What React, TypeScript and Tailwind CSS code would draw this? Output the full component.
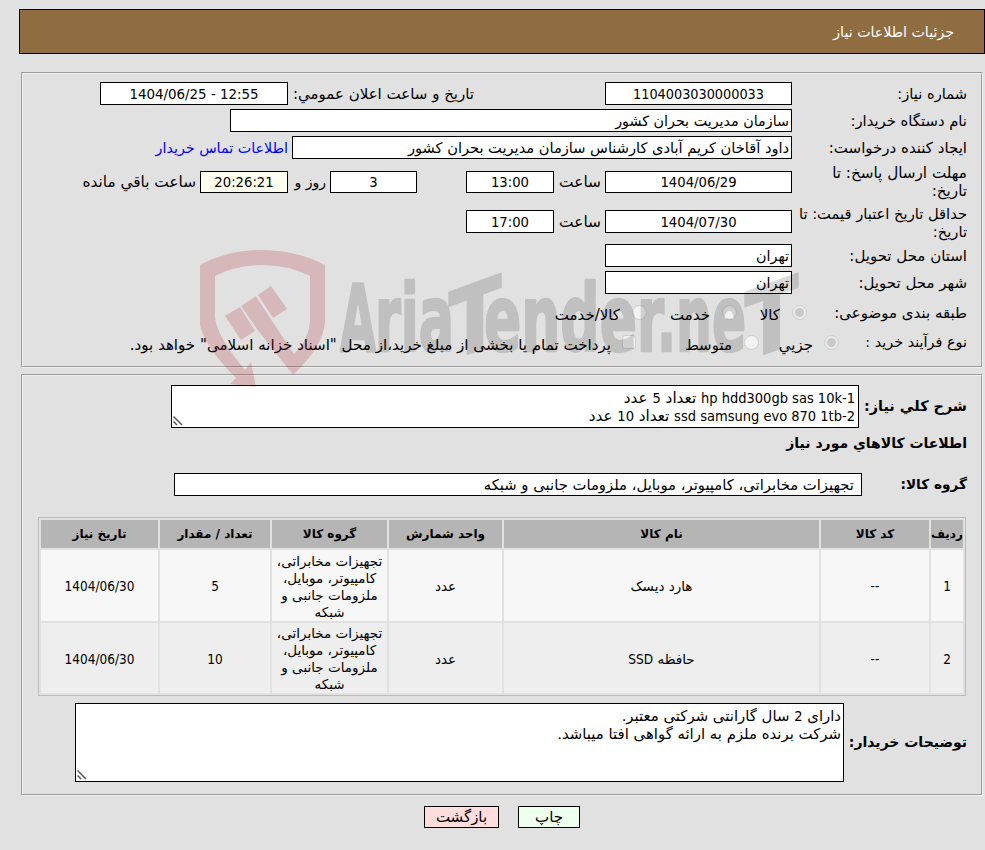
import React from 'react';

interface FieldProps {
  className: string;
  children?: React.ReactNode;
}

interface ItemRow {
  index: string;
  code: string;
  name: React.ReactNode;
  unit: string;
  group: string;
  quantity: string;
  date: string;
}

// Latin letters and digits are set in a narrower face than the Persian text
const Latin: React.FC<{ children?: React.ReactNode }> = ({ children }) => (
  <span className="text-[14.5px] font-['DejaVu_Sans_Condensed','DejaVu_Sans',sans-serif]">{children}</span>
);

const items: ItemRow[] = [
  {
    index: '1',
    code: '--',
    name: 'هارد دیسک',
    unit: 'عدد',
    group: 'تجهیزات مخابراتی، کامپیوتر، موبایل، ملزومات جانبی و شبکه',
    quantity: '5',
    date: '1404/06/30'
  },
  {
    index: '2',
    code: '--',
    name: (
      <span>
        حافظه <span className="font-['DejaVu_Sans_Condensed','DejaVu_Sans',sans-serif]">SSD</span>
      </span>
    ),
    unit: 'عدد',
    group: 'تجهیزات مخابراتی، کامپیوتر، موبایل، ملزومات جانبی و شبکه',
    quantity: '10',
    date: '1404/06/30'
  }
];

const headers = ['ردیف', 'کد کالا', 'نام کالا', 'واحد شمارش', 'گروه کالا', 'تعداد / مقدار', 'تاریخ نیاز'];

const gridCols = 'grid grid-cols-[32px_108px_315px_113px_115px_110px_117px] gap-0.5';

const Label: React.FC<FieldProps> = ({ className, children }) => (
  <div className={`shrink-0 whitespace-nowrap ${className}`}>{children}</div>
);

const Field: React.FC<FieldProps> = ({ className, children }) => (
  <div className={`shrink-0 h-[23px] border border-black leading-[22px] whitespace-nowrap ${className}`}>{children}</div>
);

const NumberField: React.FC<FieldProps> = ({ className, children }) => (
  <div
    dir="ltr"
    className={`shrink-0 border border-black text-center whitespace-nowrap font-['DejaVu_Sans_Condensed','DejaVu_Sans',sans-serif] ${className}`}
  >
    {children}
  </div>
);

const Radio: React.FC<{ checked?: boolean }> = ({ checked }) => (
  <span
    className={`flex shrink-0 w-[15px] h-[15px] items-center justify-center rounded-full border border-[#cdcdcd] ${
      checked ? 'bg-[#ebebeb]' : 'bg-[#f2f2f2]'
    }`}
  >
    {checked && <span className="w-[9px] h-[9px] rounded-full bg-[#c9c9c9]" />}
  </span>
);

const ResizeHandle: React.FC = () => (
  <svg className="absolute left-px bottom-px" width="10" height="10" viewBox="0 0 10 10">
    <path d="M0.5 0.5 L9 9 M0.5 5.5 L4 9" stroke="#5a5a5a" strokeWidth="1.5" fill="none" />
  </svg>
);

const Watermark: React.FC = () => (
  <svg
    className="absolute left-0 top-0 pointer-events-none [direction:ltr]"
    width="985"
    height="850"
    viewBox="0 0 985 850"
  >
    <g fill="rgb(170,20,30)" fillOpacity="0.2">
      <path d="M200 265 Q228 250 262 250 Q296 250 325 265 V322 Q323 347 293 375 L257 329 L241 306 L256 296 L272 321 L294 354 Q310 339 310 318 V276 Q288 265 262 265 Q236 265 215 276 V318 Q218 338 245 370 L251 362 L256 387 L230 384 L236 378 Q203 345 200 324 Z" />
      <path d="M225 316 L240 307 L255 331 L241 340 Z" />
      <path d="M258 295 L271 286 L287 309 L273 318 Z" />
    </g>
    <g
      className="font-['DejaVu_Sans_Condensed','DejaVu_Sans',sans-serif] font-bold"
      fill="#000"
      stroke="#000"
      strokeWidth="2.5"
      strokeLinejoin="round"
      opacity="0.14"
      fontSize="93"
    >
      <text x="340" y="351" textLength="36" lengthAdjust="spacingAndGlyphs">A</text>
      <text x="375" y="351" textLength="79" lengthAdjust="spacingAndGlyphs">ria</text>
      <text x="449" y="351" textLength="52" lengthAdjust="spacingAndGlyphs" transform="translate(475 0) skewY(-20) translate(-475 0)">T</text>
      <text x="484" y="351" textLength="180" lengthAdjust="spacingAndGlyphs">ender</text>
      <text x="657" y="351" textLength="89" lengthAdjust="spacingAndGlyphs">.ne</text>
      <text x="745" y="351" textLength="53" lengthAdjust="spacingAndGlyphs" transform="translate(772 0) skewY(-20) translate(-772 0)">T</text>
    </g>
  </svg>
);

const RequestInfo: React.FC = () => (
  <section className="w-[962px] h-[296px] mr-0.5 mt-[18px] border-2 [border-style:groove] border-[#f0f0f0] pt-2 pr-3.5">
    <div className="flex h-[27px] leading-[24px]">
      <Label className="w-[175px] text-[14.7px]">شماره نیاز:</Label>
      <NumberField className="w-[187px] h-[23px] bg-white text-[14.3px] leading-[22px]">1104003030000033</NumberField>
      <Label className="w-[186px] mr-[131px]">تاریخ و ساعت اعلان عمومي:</Label>
      <NumberField className="w-[188px] h-[23px] bg-white text-[14.9px] leading-[22px]">1404/06/25 - 12:55</NumberField>
    </div>
    <div className="flex h-[27px] leading-[24px]">
      <Label className="w-[175px] text-[14.8px]">نام دستگاه خریدار:</Label>
      <Field className="w-[562px] bg-white pr-0.5 text-[14.3px]">سازمان مدیریت بحران کشور</Field>
    </div>
    <div className="flex h-[27px] leading-[24px]">
      <Label className="w-[175px]">ایجاد کننده درخواست:</Label>
      <Field className="w-[500px] bg-white pr-0.5 text-[14.6px]">
        داود آقاخان کریم آبادی کارشناس سازمان مدیریت بحران کشور
      </Field>
      <Label className="mr-1 text-[14.3px] text-[#0000ff]">اطلاعات تماس خریدار</Label>
    </div>
    <div className="flex h-[37px] items-center">
      <Label className="w-[175px] leading-[18px] text-[15.2px]">مهلت ارسال پاسخ: تا<br />تاریخ:</Label>
      <NumberField className="w-[187px] h-[22px] bg-white text-[14.7px] leading-[20px]">1404/06/29</NumberField>
      <Label className="w-[47px] mr-1 pt-0.5 text-[15.4px]">ساعت</Label>
      <NumberField className="w-[88px] h-[22px] bg-white text-[14.7px] leading-[20px]">13:00</NumberField>
      <NumberField className="w-[87px] h-[22px] mr-[49px] bg-white text-[14.7px] leading-[20px]">3</NumberField>
      <Label className="w-[38px] mr-1 pt-px text-[14px]">روز و</Label>
      <NumberField className="w-[88px] h-[22px] bg-[#fffff0] text-[14.7px] leading-[20px]">20:26:21</NumberField>
      <Label className="mr-1 pt-px text-[15.3px]">ساعت باقي مانده</Label>
    </div>
    <div className="flex h-[43px] mb-px items-center">
      <Label className="w-[175px] pt-0.5 leading-[18px] text-[14.7px]">حداقل تاریخ اعتبار قیمت: تا<br />تاریخ:</Label>
      <NumberField className="w-[187px] h-[23px] bg-white text-[14.7px] leading-[22px]">1404/07/30</NumberField>
      <Label className="w-[47px] mr-1 pt-0.5 text-[15.4px]">ساعت</Label>
      <NumberField className="w-[88px] h-[23px] bg-white text-[14.7px] leading-[22px]">17:00</NumberField>
    </div>
    <div className="flex h-[27px] leading-[24px]">
      <Label className="w-[175px]">استان محل تحویل:</Label>
      <Field className="w-[187px] bg-white pr-0.5 text-[14.3px]">تهران</Field>
    </div>
    <div className="flex h-[27px] leading-[24px]">
      <Label className="w-[175px]">شهر محل تحویل:</Label>
      <Field className="w-[187px] bg-white pr-0.5 text-[14.3px]">تهران</Field>
    </div>
    <div className="flex h-[28px] items-center">
      <Label className="w-[160px] pt-0.5">طبقه بندی موضوعی:</Label>
      <Radio checked />
      <Label className="w-[43px] mr-3 pt-1.5">کالا</Label>
      <Radio />
      <Label className="w-[63px] mr-3 pt-1.5">خدمت</Label>
      <Radio />
      <Label className="mr-3 pt-1.5">کالا/خدمت</Label>
    </div>
    <div className="flex h-8 items-center">
      <Label className="w-[128px] pt-0.5 text-[14.4px]">نوع فرآیند خرید :</Label>
      <Radio checked />
      <Label className="w-[54px] mr-[11px] pt-1.5">جزیي</Label>
      <Radio />
      <Label className="w-[96px] mr-[12px] pt-1.5">متوسط</Label>
      <span className="shrink-0 w-[14px] h-[14px] rounded-[3px] border border-[#cdcdcd] bg-[#f2f2f2]" />
      <Label className="mr-[11px] pt-1.5 text-[15.1px]">
        پرداخت تمام یا بخشی از مبلغ خرید،از محل "اسناد خزانه اسلامی" خواهد بود.
      </Label>
    </div>
  </section>
);

const ItemsTable: React.FC = () => (
  <div className="w-[928px] mr-px mt-[21px] border border-[#bbbbbb] p-0.5 text-[13.5px] text-center">
    <div className={`${gridCols} h-7 text-[12px] font-bold`}>
      {headers.map((header) => (
        <div key={header} className="flex items-center justify-center bg-[#b5b5b5] whitespace-nowrap">{header}</div>
      ))}
    </div>
    {items.map((item, i) => (
      <div key={item.index} className={`${gridCols} mt-0.5 ${i === 0 ? 'h-[71px]' : 'h-[70px]'}`}>
        {[item.index, item.code, item.name, item.unit, item.group, item.quantity, item.date].map((value, col) => (
          <div
            key={col}
            className={`flex items-center justify-center pt-0.5 leading-[17px] ${i === 0 ? 'bg-[#f7f7f7]' : 'bg-[#eeeeee]'} ${
              [0, 1, 5, 6].includes(col) ? "font-['DejaVu_Sans_Condensed','DejaVu_Sans',sans-serif]" : ''
            }`}
          >
            {value}
          </div>
        ))}
      </div>
    ))}
  </div>
);

const ItemsInfo: React.FC = () => (
  <section className="w-[962px] h-[422px] mr-0.5 mt-1.5 border-2 [border-style:groove] border-[#f0f0f0] pt-[9px] pr-3.5">
    <div className="flex h-[43px] items-center">
      <Label className="w-[108px] text-[14.4px] font-bold">شرح كلي نياز:</Label>
      <div className="relative w-[688px] h-[43px] bg-white border border-black pr-[3px] pt-[3px] text-[15.2px] leading-[18px]">
        <div className="h-[18px]"><Latin>hp hdd300gb sas 10k-1</Latin> تعداد <Latin>5</Latin> عدد</div>
        <div className="h-[18px]"><Latin>ssd samsung evo 870 1tb-2</Latin> تعداد <Latin>10</Latin> عدد</div>
        <ResizeHandle />
      </div>
    </div>
    <div className="h-[45px] pt-[5px] text-[14px] font-bold leading-[20px]">اطلاعات كالاهاي مورد نياز</div>
    <div className="flex h-[23px] items-center">
      <Label className="w-[105px] text-[13.7px] font-bold">گروه کالا:</Label>
      <Field className="w-[688px] bg-white pr-[7px] text-[14.8px]">
        تجهیزات مخابراتی، کامپیوتر، موبایل، ملزومات جانبی و شبکه
      </Field>
    </div>
    <ItemsTable />
    <div className="flex mt-[7px] h-[79px] items-center">
      <Label className="w-[123px] text-[14px] font-bold">توضیحات خریدار:</Label>
      <div className="relative w-[769px] h-[79px] bg-white border border-black pr-0.5 pt-[3px] text-[14.9px] leading-[18px]">
        <div className="h-[18px]">دارای <Latin>2</Latin> سال گارانتی شرکتی معتبر.</div>
        <div className="h-[18px]">شرکت برنده ملزم به ارائه گواهی افتا میباشد.</div>
        <ResizeHandle />
      </div>
    </div>
  </section>
);

const App: React.FC = () => {
  return (
    <div
      dir="rtl"
      className="relative w-[985px] h-[850px] overflow-hidden bg-[#e1e1e1] pt-[9px] text-[15px] text-black font-['DejaVu_Sans',sans-serif]"
    >
      <header className="w-[966px] h-[45px] border border-black bg-[#8f6d40] pr-[30px] text-[14.2px] leading-[44px] text-white">
        جزئیات اطلاعات نیاز
      </header>
      <RequestInfo />
      <ItemsInfo />
      <div className="flex mt-2.5 pr-[405px] gap-[19px] text-center">
        <button className="w-[62px] h-[22px] border border-black bg-[#eeffee] leading-[21px]">چاپ</button>
        <button className="w-[75px] h-[22px] border border-black bg-[#ffdddd] leading-[21px]">بازگشت</button>
      </div>
      <Watermark />
    </div>
  );
};

export default App;
